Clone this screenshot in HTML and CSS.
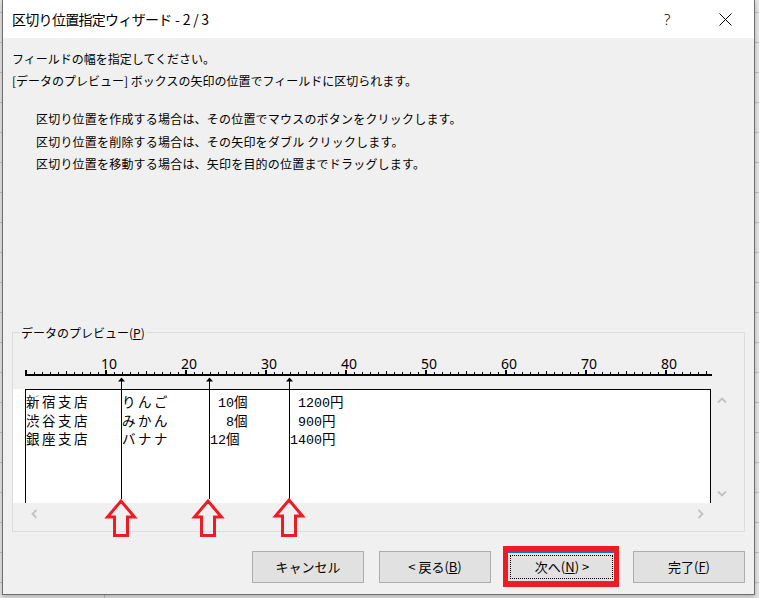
FILE: index.html
```html
<!DOCTYPE html>
<html lang="ja">
<head>
<meta charset="utf-8">
<title>区切り位置指定ウィザード</title>
<link rel="stylesheet" href="styles.css">
</head>
<body>
<div class="dialog">
  <div class="titlebar">
    <span class="title">区切り位置指定ウィザード - 2 / 3</span>
    <span class="help">?</span>
    <span class="close"><svg width="13" height="13" viewBox="0 0 13 13"><path d="M0.5 0.5 L12.5 12.5 M12.5 0.5 L0.5 12.5" stroke="#000" stroke-width="1" fill="none"/></svg></span>
  </div>
  <div class="content">
    <p class="line">フィールドの幅を指定してください。</p>
    <p class="line">[データのプレビュー] ボックスの矢印の位置でフィールドに区切られます。</p>
    <ul class="hints">
      <li>区切り位置を作成する場合は、その位置でマウスのボタンをクリックします。</li>
      <li>区切り位置を削除する場合は、その矢印をダブル クリックします。</li>
      <li>区切り位置を移動する場合は、矢印を目的の位置までドラッグします。</li>
    </ul>
    <div class="group">
      <span class="legend">データのプレビュー(<u>P</u>)</span>
      <div class="ruler">
        <div class="ruler-nums"><span>10</span><span>20</span><span>30</span><span>40</span><span>50</span><span>60</span><span>70</span><span>80</span></div>
        <div class="ruler-ticks"></div>
      </div>
      <div class="preview">
        <div class="data-col">
          <div class="marker-space"></div>
          <div class="data-outer">
            <div class="data-box">
              <div class="data-grid">
                <span class="cell" style="grid-column-start:1">新宿支店</span>
                <span class="cell" style="grid-column-start:13">りんご</span>
                <span class="cell" style="grid-column-start:25"><span class="n">10</span>個</span>
                <span class="cell" style="grid-column-start:35"><span class="n">1200</span>円</span>
                <span class="cell" style="grid-column-start:1">渋谷支店</span>
                <span class="cell" style="grid-column-start:13">みかん</span>
                <span class="cell" style="grid-column-start:26"><span class="n">8</span>個</span>
                <span class="cell" style="grid-column-start:35"><span class="n">900</span>円</span>
                <span class="cell" style="grid-column-start:1">銀座支店</span>
                <span class="cell" style="grid-column-start:13">バナナ</span>
                <span class="cell" style="grid-column-start:24"><span class="n">12</span>個</span>
                <span class="cell" style="grid-column-start:34"><span class="n">1400</span>円</span>
              </div>
            </div>
          </div>
          <div class="hscroll">
            <svg class="chev" width="7" height="10" viewBox="0 0 7 10"><polyline points="5.5,1 1.5,5 5.5,9" fill="none" stroke="#c2c2c2" stroke-width="1.8"/></svg>
            <svg class="chev" width="7" height="10" viewBox="0 0 7 10"><polyline points="1.5,1 5.5,5 1.5,9" fill="none" stroke="#c2c2c2" stroke-width="1.8"/></svg>
          </div>
          <svg class="breaks" width="698" height="127" viewBox="0 0 698 127">
            <g fill="#000" stroke="none">
              <polygon points="105,5.5 108.5,1.5 112,5.5"/>
              <polygon points="193,5.5 196.5,1.5 200,5.5"/>
              <polygon points="273,5.5 276.5,1.5 280,5.5"/>
            </g>
            <g stroke="#000" stroke-width="1">
              <line x1="108.5" y1="5" x2="108.5" y2="123"/>
              <line x1="196.5" y1="5" x2="196.5" y2="123"/>
              <line x1="276.5" y1="5" x2="276.5" y2="123"/>
            </g>
          </svg>
        </div>
        <div class="vscroll">
          <svg class="chev" width="10" height="7" viewBox="0 0 10 7"><polyline points="1,5.5 5,1.5 9,5.5" fill="none" stroke="#c2c2c2" stroke-width="1.8"/></svg>
          <svg class="chev" width="10" height="7" viewBox="0 0 10 7"><polyline points="1,1.5 5,5.5 9,1.5" fill="none" stroke="#c2c2c2" stroke-width="1.8"/></svg>
        </div>
      </div>
      <svg class="callouts" width="300" height="50" viewBox="0 0 300 50">
        <g fill="none" stroke="#ed1c24" stroke-width="3" stroke-linejoin="miter">
          <polygon points="108,8 121.5,24 114.5,24 114.5,42.5 101.5,42.5 101.5,24 94.5,24"/>
          <polygon points="195,8 208.5,24 201.5,24 201.5,42.5 188.5,42.5 188.5,24 181.5,24"/>
          <polygon points="276,7 289.5,23 282.5,23 282.5,42.5 269.5,42.5 269.5,23 262.5,23"/>
        </g>
      </svg>
    </div>
    <div class="buttons">
      <button class="btn" type="button">キャンセル</button>
      <button class="btn" type="button">&lt; 戻る(<u>B</u>)</button>
      <button class="btn btn-next" type="button">次へ(<u>N</u>) &gt;</button>
      <button class="btn" type="button">完了(<u>F</u>)</button>
    </div>
  </div>
</div>
</body>
</html>
```
FILE: styles.css
```css
html, body {
  margin: 0;
  padding: 0;
}

body {
  width: 759px;
  height: 598px;
  overflow: hidden;
  background-color: #e6e6e6;
  background-image:
    linear-gradient(to right, transparent 104px, #bdbdbd 104px, #bdbdbd 105px, transparent 105px),
    repeating-linear-gradient(to bottom, transparent 0, transparent 12px, #bdbdbd 12px, #bdbdbd 13px, transparent 13px, transparent 30px);
  font-family: "Noto Sans CJK JP", "Noto Sans", sans-serif;
  color: #000;
}

.dialog {
  margin-left: 2px;
  width: 753px;
  height: 595px;
  box-sizing: border-box;
  border: 1px solid #6f6f6f;
  border-top: none;
  background: #f0f0f0;
  display: flex;
  flex-direction: column;
  box-shadow: 0 2px 5px rgba(0, 0, 0, 0.25);
}

.titlebar {
  height: 38px;
  flex: none;
  background: #fff;
  display: flex;
  align-items: center;
  padding-left: 9px;
  padding-right: 22px;
}

.title {
  font-size: 14px;
  line-height: 20px;
  letter-spacing: -0.7px;
  word-spacing: 1px;
}

.help {
  margin-left: auto;
  font-family: "Noto Sans", sans-serif;
  font-size: 15px;
  font-weight: 300;
  line-height: 20px;
  width: 8px;
}

.close {
  margin-left: 47px;
  width: 13px;
  height: 13px;
  display: flex;
}

.content {
  flex: 1;
  padding: 10px 9px 0 9px;
  display: flex;
  flex-direction: column;
}

.line {
  margin: 0;
  font-size: 12px;
  line-height: 22px;
}

.hints {
  margin: 16px 0 0;
  padding: 0 0 0 24px;
  list-style: none;
  font-size: 12px;
  line-height: 22.5px;
  letter-spacing: 0.2px;
}

.group {
  position: relative;
  margin-top: 156.5px;
  height: 200px;
  box-sizing: border-box;
  border: 1px solid #dcdcdc;
}

.legend {
  position: absolute;
  left: 7px;
  top: -9px;
  padding: 0 1px;
  background: #f0f0f0;
  font-size: 12px;
  line-height: 18px;
}

.ruler {
  margin-left: 12px;
  margin-top: 24px;
  width: 687px;
}

.ruler-nums {
  display: flex;
  height: 13px;
  padding-left: 76px;
  font-family: "Noto Sans", sans-serif;
  font-size: 14px;
  line-height: 13px;
}

.ruler-nums span {
  flex: none;
  width: 80px;
}

.ruler-ticks {
  height: 6px;
  background-image:
    linear-gradient(#000, #000),
    repeating-linear-gradient(to right, #000 0, #000 2px, transparent 2px, transparent 80px),
    repeating-linear-gradient(to right, transparent 0, transparent 1px, #000 1px, #000 2px, transparent 2px, transparent 40px),
    repeating-linear-gradient(to right, transparent 0, transparent 1px, #000 1px, #000 2px, transparent 2px, transparent 8px);
  background-size: 100% 2px, 100% 4px, 100% 3px, 100% 2px;
  background-position: 0 4px, 0 0, 0 1px, 0 2px;
  background-repeat: no-repeat;
}

.preview {
  display: flex;
}

.data-col {
  position: relative;
  width: 698px;
  flex: none;
}

.marker-space {
  height: 13px;
}

.data-outer {
  background: #fff;
  padding-left: 12px;
  height: 114px;
  box-sizing: border-box;
}

.data-box {
  height: 114px;
  box-sizing: border-box;
  border: 1px solid #000;
  border-bottom: none;
  padding-top: 2px;
}

.data-grid {
  display: grid;
  grid-template-columns: repeat(85, 8px);
  grid-auto-rows: 18.5px;
}

.cell {
  white-space: nowrap;
  font-family: "Noto Sans CJK JP", sans-serif;
  font-size: 13.5px;
  font-weight: 400;
  letter-spacing: 2.5px;
  line-height: 18.5px;
}

.cell .n {
  font-family: "Liberation Mono", monospace;
  font-size: 13.333px;
  letter-spacing: 0;
}

.hscroll {
  height: 20px;
  display: flex;
  align-items: flex-start;
  justify-content: space-between;
  padding: 6px 7px 0 18px;
  box-sizing: border-box;
}

.vscroll {
  flex: 1;
  display: flex;
  flex-direction: column;
  align-items: flex-start;
  padding: 21px 0 0 6px;
  gap: 86px;
}

.chev {
  display: block;
}

.breaks {
  position: absolute;
  left: 0;
  top: 0;
}

.callouts {
  position: absolute;
  left: 0;
  top: 160px;
}

.buttons {
  display: flex;
  justify-content: flex-end;
  gap: 15px;
  margin-top: 19px;
}

.btn {
  position: relative;
  width: 112px;
  height: 32px;
  box-sizing: border-box;
  border: 1px solid #adadad;
  background: #e1e1e1;
  font-family: "Noto Sans CJK JP", sans-serif;
  font-size: 13px;
  color: #000;
  padding: 0;
  line-height: 20px;
}

.btn-next {
  border: 2px solid #0078d7;
}

.btn-next::before {
  content: "";
  position: absolute;
  left: 2px;
  top: 2px;
  right: 3px;
  bottom: 2px;
  border: 1px dotted #000;
}

.btn-next::after {
  content: "";
  position: absolute;
  left: -5px;
  top: -7px;
  width: 116px;
  height: 41px;
  box-sizing: border-box;
  border: 5px solid #ed1c24;
}
```
